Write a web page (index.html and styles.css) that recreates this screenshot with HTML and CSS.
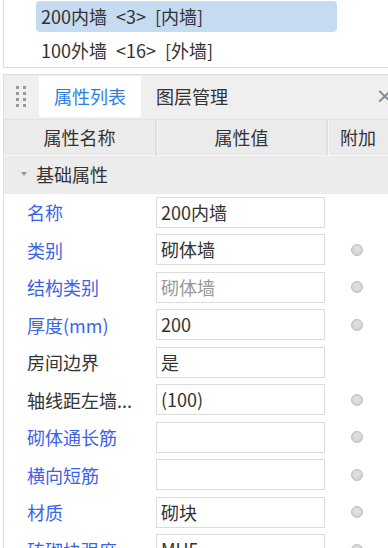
FILE: index.html
```html
<!DOCTYPE html>
<html lang="zh-CN">
<head>
<meta charset="utf-8">
<link rel="stylesheet" href="styles.css">
</head>
<body>
<div class="list-panel">
  <div class="list-item selected">200内墙 &lt;3&gt; [内墙]</div>
  <div class="list-item">100外墙 &lt;16&gt; [外墙]</div>
</div>
<div class="prop-panel">
  <div class="tabbar">
    <div class="grip">
      <span></span><span></span><span></span><span></span>
      <span></span><span></span><span></span><span></span>
    </div>
    <div class="tab active">属性列表</div>
    <div class="tab">图层管理</div>
    <div class="close">×</div>
  </div>
  <div class="table">
    <div class="hdr">属性名称</div>
    <div class="hdr div">属性值</div>
    <div class="hdr div">附加</div>

    <div class="group"><span class="tri"></span>基础属性</div>

    <div class="name blue">名称</div>
    <div class="val"><div class="box">200内墙</div></div>
    <div class="extra"></div>

    <div class="name blue">类别</div>
    <div class="val"><div class="box">砌体墙</div></div>
    <div class="extra"><span class="radio"></span></div>

    <div class="name blue">结构类别</div>
    <div class="val"><div class="box dis">砌体墙</div></div>
    <div class="extra"><span class="radio"></span></div>

    <div class="name blue">厚度(mm)</div>
    <div class="val"><div class="box">200</div></div>
    <div class="extra"><span class="radio"></span></div>

    <div class="name">房间边界</div>
    <div class="val"><div class="box">是</div></div>
    <div class="extra"></div>

    <div class="name">轴线距左墙...</div>
    <div class="val"><div class="box">(100)</div></div>
    <div class="extra"><span class="radio"></span></div>

    <div class="name blue">砌体通长筋</div>
    <div class="val"><div class="box"></div></div>
    <div class="extra"><span class="radio"></span></div>

    <div class="name blue">横向短筋</div>
    <div class="val"><div class="box"></div></div>
    <div class="extra"><span class="radio"></span></div>

    <div class="name blue">材质</div>
    <div class="val"><div class="box">砌块</div></div>
    <div class="extra"><span class="radio"></span></div>

    <div class="name blue">砖砌块强度</div>
    <div class="val"><div class="box">MU5</div></div>
    <div class="extra"><span class="radio"></span></div>
  </div>
</div>
</body>
</html>
```
FILE: styles.css
```css
* { box-sizing: border-box; }
html, body {
  margin: 0;
  padding: 0;
  background: #fff;
  overflow: hidden;
  height: 548px;
}
body {
  font-family: "Noto Sans CJK SC", "Microsoft YaHei", sans-serif;
  font-size: 18px;
  color: #333;
}
.list-panel {
  margin-left: 3px;
  border-left: 1px solid #dcdcdc;
  border-bottom: 1px solid #dcdcdc;
  height: 68px;
  padding-top: 1px;
  display: flex;
  flex-direction: column;
  gap: 3px;
}
.list-item {
  margin-left: 32px;
  width: 301px;
  height: 31px;
  line-height: 31px;
  padding-left: 5px;
  border-radius: 4px;
  color: #333;
  white-space: pre;
  word-spacing: 5px;
}
.list-item.selected { background: #c5dbf1; }

.prop-panel {
  margin-top: 6px;
  margin-left: 3px;
  border-left: 1px solid #dcdcdc;
  border-top: 1px solid #dcdcdc;
}
.tabbar {
  height: 45px;
  background: #efefef;
  display: flex;
  align-items: flex-end;
  position: relative;
  border-bottom: 1px solid #e2e2e2;
}
.grip {
  width: 35px;
  height: 45px;
  display: grid;
  grid-template-columns: 3px 3px;
  grid-auto-rows: 3px;
  column-gap: 4px;
  row-gap: 3px;
  align-content: center;
  justify-content: center;
  padding-right: 2px;
}
.grip span { background: #999; display: block; }
.tab {
  height: 41px;
  margin-bottom: 2px;
  line-height: 41px;
  padding: 0 15px;
  color: #333;
}
.tab.active { background: #fff; color: #2e7ee0; }
.close {
  position: absolute;
  right: -6px;
  top: 8px;
  font-size: 22px;
  color: #888;
  font-family: "DejaVu Sans", sans-serif;
}
.table {
  display: grid;
  grid-template-columns: 151px 171px 62px;
}
.hdr {
  height: 36px;
  line-height: 35px;
  background: #ebebeb;
  text-align: center;
  color: #333;
  border-bottom: 1px solid #f6f6f6;
}
.hdr.div { border-left: 2px solid #dedede; box-shadow: inset 1px 0 0 #f6f6f6; }
.group {
  grid-column: 1 / 4;
  height: 37.5px;
  line-height: 36px;
  background: #ececec;
  padding-left: 32px;
  position: relative;
}
.tri {
  position: absolute;
  left: 17px;
  top: 16px;
  width: 0;
  height: 0;
  border-left: 3.5px solid transparent;
  border-right: 3.5px solid transparent;
  border-top: 4px solid #999;
}
.name, .val, .extra {
  height: 37.5px;
  display: flex;
  align-items: center;
}
.name {
  padding-left: 23px;
  color: #333;
  white-space: nowrap;
}
.name.blue { color: #3c62e8; }
.val { padding-left: 1px; }
.box {
  width: 169px;
  height: 31px;
  border: 1px solid #dcdcdc;
  padding-left: 4px;
  line-height: 29px;
  color: #333;
  background: #fff;
}
.box.dis { color: #999; }
.extra { justify-content: center; }
.radio {
  width: 12px;
  height: 12px;
  border-radius: 50%;
  border: 1px solid #bdbdbd;
  background: radial-gradient(circle at 50% 40%, #e4e4e4, #cbcbcb);
}
```
